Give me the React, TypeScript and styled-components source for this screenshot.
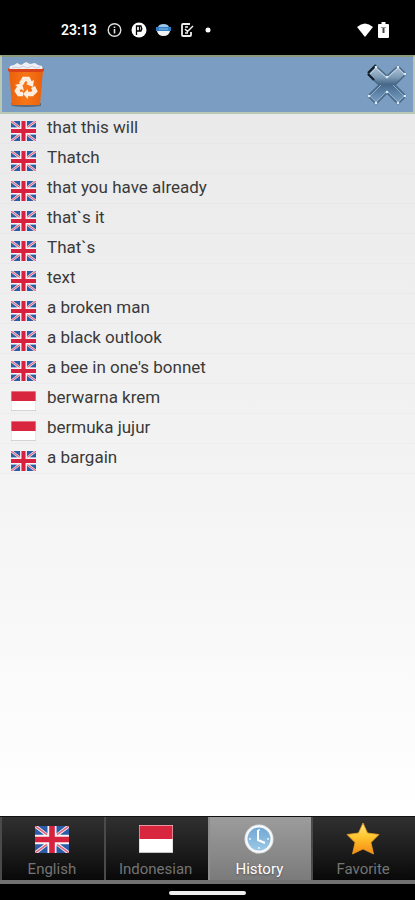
import React, { useState } from "react";
import styled, { createGlobalStyle } from "styled-components";

const GlobalStyle = createGlobalStyle`
  *, *::before, *::after { box-sizing: border-box; }
  body {
    margin: 0;
    background: #000;
    font-family: Roboto, "Liberation Sans", sans-serif;
  }
  button { font: inherit; border: 0; padding: 0; cursor: pointer; }
  svg { display: block; flex: none; }
`;

const Screen = styled.div`
  display: flex;
  flex-direction: column;
  min-height: 100vh;
`;

const StatusBar = styled.header`
  display: flex;
  align-items: center;
  justify-content: space-between;
  height: 55px;
  padding: 4px 26px 0 61px;
  background: #000;
  color: #fff;
`;

const StatusGroup = styled.div<{ $gap: number }>`
  display: flex;
  align-items: center;
  gap: ${(p) => p.$gap}px;
`;

const Clock = styled.time`
  font-size: 14px;
  line-height: 16px;
  font-weight: 600;
  margin-right: 1px;
`;

const Toolbar = styled.div`
  display: flex;
  align-items: center;
  justify-content: space-between;
  height: 59px;
  padding: 0 5px 0 6px;
  background: #7a9dc1;
  border: 2px solid #b9c8b4;
  border-top-color: #8d9a78;
`;

const ToolButton = styled.button`
  display: flex;
  background: none;
`;

const Content = styled.main`
  flex: 1;
  background: linear-gradient(#eaeaea, #f3f3f3 50%, #ffffff);
`;

const EntryList = styled.ul`
  list-style: none;
  margin: 0;
  padding: 0;
`;

const Entry = styled.li`
  border-bottom: 1px solid rgba(0, 0, 0, 0.02);
`;

const EntryButton = styled.button`
  display: flex;
  align-items: flex-start;
  gap: 11px;
  width: 100%;
  height: 29px;
  padding: 0 11px;
  background: none;
  text-align: left;
`;

const EntryFlag = styled.span`
  padding-top: 7px;
`;

const EntryText = styled.span`
  font-size: 17px;
  line-height: 26px;
  color: #3a3a3a;
`;

const TabBar = styled.nav`
  display: grid;
  grid-template-columns: repeat(4, 1fr);
  border-top: 1px solid #111;
  border-bottom: 4px solid #707070;
  background: #1c1c1c;
`;

const Tab = styled.button<{ $active: boolean }>`
  display: flex;
  flex-direction: column;
  align-items: center;
  justify-content: space-between;
  height: 63px;
  padding: 5px 2px 2px 0;
  border-left: 2px solid ${(p) => (p.$active ? "#8c8c8c" : "#4a4a4a")};
  background: ${(p) =>
    p.$active
      ? "linear-gradient(#9c9c9c, #7b7b7b)"
      : "linear-gradient(#303030, #1c1c1c 55%, #080808)"};
  color: ${(p) => (p.$active ? "#fff" : "#747474")};
  text-shadow: ${(p) => (p.$active ? "0 1px 2px #555" : "none")};
`;

const TabIcon = styled.span`
  display: flex;
  align-items: center;
  height: 34px;
`;

const TabLabel = styled.span`
  font-size: 15px;
  line-height: 18px;
`;

const GestureBar = styled.footer`
  display: flex;
  justify-content: center;
  height: 16px;
  padding-top: 7px;
  background: #000;
`;

const GestureHandle = styled.div`
  width: 77px;
  height: 4px;
  border-radius: 2px;
  background: #eee;
`;

type Lang = "en" | "id";

function Flag({ lang, width, height }: { lang: Lang; width: number; height: number }) {
  if (lang === "id") {
    return (
      <svg width={width} height={height} viewBox="0 0 34 28" preserveAspectRatio="none" aria-label="Indonesian">
        <rect width="34" height="28" fill="#c4c4c4" />
        <rect x=".5" width="33" height="27" fill="#fff" />
        <rect x=".5" y=".5" width="33" height="13.500" fill="#d8263f" />
      </svg>
    );
  }
  return (
    <svg width={width} height={height} viewBox="0 0 34 28" preserveAspectRatio="none" aria-label="English">
      <rect width="34" height="28" fill="#f4f0f5" />
      <path
        d="M3 0H13V8ZM0 2V9H9ZM31 0H21V8ZM34 2V9H25ZM3 28H13V20ZM0 26V19H9ZM31 28H21V20ZM34 26V19H25Z"
        fill="#2a5ca8"
      />
      <path d="M0 0 12 9M34 0 22 9M0 28 12 19M34 28 22 19" stroke="#e2667b" strokeWidth="1.600" />
      <path d="M17 0V28M0 14H34" stroke="#faf3f6" strokeWidth="9" />
      <path d="M17 0V28M0 14H34" stroke="#d6223f" strokeWidth="5.600" />
    </svg>
  );
}

function TrashIcon() {
  return (
    <svg width="36" height="46" viewBox="0 0 36 46">
      <defs>
        <linearGradient id="bin" x1="0" x2="1">
          <stop offset="0" stopColor="#ea600d" />
          <stop offset=".5" stopColor="#f77617" />
          <stop offset="1" stopColor="#e9600a" />
        </linearGradient>
      </defs>
      <path d="M3 41H33V44Q18 46 4 44Z" fill="#4d5560" opacity=".7" />
      <path d="M1 8 2 4 6 3 9 1 13 3 18 0 22 2 27 1 30 3 34 4 35 8Z" fill="#eef0f6" />
      <path d="M4 6 8 5 11 6 15 4 19 6 24 4 28 6 32 5" fill="none" stroke="#ccd0dc" />
      <path d="M1 8H35L32 43H4Z" fill="url(#bin)" />
      <path d="M0 6 2 7H34L36 6V9L34 10H2L0 9Z" fill="#d9421a" />
      <g fill="none" stroke="#ffeedd" strokeWidth="4.500">
        <path d="M13 22 16 17H20L22 21" />
        <path d="M25 25 27 29 24 32H20" />
        <path d="M15 32H11L9 29 12 24" />
      </g>
      <g fill="#ffeedd">
        <path d="M18 22 26 18 25 25Z" />
        <path d="M20 27V37L15 32Z" />
        <path d="M7 23 14 21 16 29Z" />
      </g>
    </svg>
  );
}

function CloseIcon() {
  return (
    <svg width="42" height="42" viewBox="0 0 42 42">
      <defs>
        <linearGradient id="cross" x1="0" y1="0" x2="0" y2="1">
          <stop offset="0" stopColor="#b4c9db" />
          <stop offset=".3" stopColor="#7c9ab5" />
          <stop offset=".48" stopColor="#466788" />
          <stop offset=".7" stopColor="#5c82a7" />
          <stop offset="1" stopColor="#80a3c5" />
        </linearGradient>
      </defs>
      <path
        d="M2 10 10 2 21 12 32 2 40 10 29 21 40 32 32 40 21 29 10 40 2 32 13 21Z"
        fill="url(#cross)"
        stroke="#4b6985"
        strokeWidth="1.500"
        strokeLinejoin="round"
      />
      <path d="M4 10 10 4 21 14 32 4 38 10" fill="none" stroke="#c6d8e6" strokeWidth="1" />
      <path d="M15 21 4 32 10 38 21 27 32 38 38 32 27 21" fill="none" stroke="#91b0cc" strokeWidth="1" />
      <path d="M10 1 2 9M2 10 8 16" stroke="#141e29" strokeWidth="2.200" />
      <g fill="#d5e9f6">
        <circle cx="10" cy="3" r="1.300" />
        <circle cx="32" cy="3" r="1.300" />
        <circle cx="39" cy="10" r="1.300" />
        <circle cx="21" cy="13" r="1.300" />
        <circle cx="21" cy="28" r="1.300" />
        <circle cx="3" cy="32" r="1.300" />
        <circle cx="10" cy="39" r="1.300" />
        <circle cx="32" cy="39" r="1.300" />
        <circle cx="39" cy="32" r="1.300" />
      </g>
    </svg>
  );
}

function HistoryIcon() {
  return (
    <svg width="30" height="30" viewBox="0 0 30 30">
      <defs>
        <linearGradient id="dial" x1="0" y1="0" x2="0" y2="1">
          <stop offset="0" stopColor="#71a8d4" />
          <stop offset="1" stopColor="#9cc8e6" />
        </linearGradient>
      </defs>
      <circle cx="15" cy="15" r="14.500" fill="#dfe3e6" />
      <circle cx="15" cy="15" r="13.500" fill="#fafafa" />
      <circle cx="15" cy="15" r="11.500" fill="url(#dial)" />
      <path d="M15 5V7M15 23V25M5 15H7M23 15H25" stroke="#e5f3fc" strokeWidth="1.500" />
      <path d="M14 6V16L21 19" fill="none" stroke="#fff" strokeWidth="2" />
    </svg>
  );
}

function StarIcon() {
  return (
    <svg width="34" height="34" viewBox="0 0 34 34">
      <defs>
        <linearGradient id="star" x1="0" y1="0" x2="0" y2="1">
          <stop offset="0" stopColor="#ffe98a" />
          <stop offset=".45" stopColor="#ffc52e" />
          <stop offset="1" stopColor="#f58a13" />
        </linearGradient>
      </defs>
      <path
        d="M17 1 21.500 11 33 12.500 25 20.500 27.500 32 17 27 6.500 32 9 20.500 1 12.500 12.500 11Z"
        fill="url(#star)"
        stroke="#e99a22"
        strokeWidth=".8"
        strokeLinejoin="round"
      />
    </svg>
  );
}

function StatusIcons() {
  return (
    <>
      <svg width="15" height="16" viewBox="0 0 15 16">
        <circle cx="7.500" cy="8" r="6.300" fill="none" stroke="#ddd" strokeWidth="1.400" />
        <path d="M7.500 4.500V6M7.500 7V11.500" stroke="#ddd" strokeWidth="1.600" />
      </svg>
      <svg width="16" height="16" viewBox="0 0 16 16">
        <circle cx="8" cy="8" r="7.500" fill="#fff" />
        <path d="M5.500 13V4H8.500V9H5.500M8.500 4H10Q11.500 6.500 10 9H8.500" fill="none" stroke="#000" strokeWidth="1.300" />
      </svg>
      <svg width="15" height="16" viewBox="0 0 15 16">
        <path d="M2 5Q3 2 7.500 2T13 5Z" fill="#9ec7e8" />
        <path d="M0 5H15V9H0Z" fill="#2f7fc6" />
        <path d="M1 9H14Q13 14 7.500 14T1 9Z" fill="#f2f2f2" />
        <path d="M3 7H12" stroke="#8dbde6" />
      </svg>
      <svg width="14" height="16" viewBox="0 0 14 16">
        <path d="M10 2H3Q2 2 2 3V13Q2 14 3 14H10Q11 14 11 13V10" fill="none" stroke="#eee" strokeWidth="1.800" />
        <path d="M5 7 7.500 9.500 13 4M5 11H8M5 5H8" fill="none" stroke="#eee" strokeWidth="1.500" />
      </svg>
      <svg width="10" height="6" viewBox="0 0 10 6">
        <circle cx="5" cy="3" r="2.500" fill="#fff" />
      </svg>
    </>
  );
}

const entries: { lang: Lang; text: string }[] = [
  { lang: "en", text: "that this will" },
  { lang: "en", text: "Thatch" },
  { lang: "en", text: "that you have already" },
  { lang: "en", text: "that`s it" },
  { lang: "en", text: "That`s" },
  { lang: "en", text: "text" },
  { lang: "en", text: "a broken man" },
  { lang: "en", text: "a black outlook" },
  { lang: "en", text: "a bee in one's bonnet" },
  { lang: "id", text: "berwarna krem" },
  { lang: "id", text: "bermuka jujur" },
  { lang: "en", text: "a bargain" },
];

const tabs = [
  { label: "English", icon: <Flag lang="en" width={34} height={27} /> },
  { label: "Indonesian", icon: <Flag lang="id" width={34} height={28} /> },
  { label: "History", icon: <HistoryIcon /> },
  { label: "Favorite", icon: <StarIcon /> },
];

export default function App() {
  const [active, setActive] = useState("History");
  return (
    <>
      <GlobalStyle />
      <Screen>
        <StatusBar>
          <StatusGroup $gap={9}>
            <Clock>23:13</Clock>
            <StatusIcons />
          </StatusGroup>
          <StatusGroup $gap={5}>
            <svg width="16" height="14" viewBox="0 0 16 14">
              <path d="M0 4Q8-3 16 4L8 14Z" fill="#fff" />
            </svg>
            <svg width="11" height="16" viewBox="0 0 11 16">
              <path d="M3.500 0H7.500V2H10Q11 2 11 3V15Q11 16 10 16H1Q0 16 0 15V3Q0 2 1 2H3.500Z" fill="#fff" />
              <path d="M3 5.500H8" stroke="#999" />
              <path d="M5.500 6V11" stroke="#444" strokeWidth="2" />
            </svg>
          </StatusGroup>
        </StatusBar>
        <Toolbar>
          <ToolButton aria-label="Clear history">
            <TrashIcon />
          </ToolButton>
          <ToolButton aria-label="Close">
            <CloseIcon />
          </ToolButton>
        </Toolbar>
        <Content>
          <EntryList>
            {entries.map((e) => (
              <Entry key={e.text}>
                <EntryButton>
                  <EntryFlag>
                    <Flag lang={e.lang} width={25} height={20} />
                  </EntryFlag>
                  <EntryText>{e.text}</EntryText>
                </EntryButton>
              </Entry>
            ))}
          </EntryList>
        </Content>
        <TabBar>
          {tabs.map((t) => (
            <Tab
              key={t.label}
              $active={t.label === active}
              aria-pressed={t.label === active}
              onClick={() => setActive(t.label)}
            >
              <TabIcon>{t.icon}</TabIcon>
              <TabLabel>{t.label}</TabLabel>
            </Tab>
          ))}
        </TabBar>
        <GestureBar>
          <GestureHandle />
        </GestureBar>
      </Screen>
    </>
  );
}
